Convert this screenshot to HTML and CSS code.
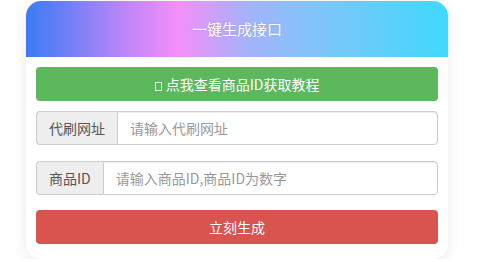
FILE: index.html
```html
<!DOCTYPE html>
<html lang="zh-CN">
<head>
<meta charset="UTF-8" />
<meta name="viewport" content="width=device-width, initial-scale=1.0" />
<title>一键生成接口</title>
<link rel="stylesheet" href="styles.css">
</head>
<body>
<div class="panel">
    <div class="panel-heading">一键生成接口</div>
    <div class="panel-body">
        <a class="btn btn-success" href="#"><i class="icon-box"></i> 点我查看商品ID获取教程</a>

        <div class="input-group">
            <span class="addon">代刷网址</span>
            <input type="text" placeholder="请输入代刷网址">
        </div>

        <div class="input-group">
            <span class="addon">商品ID</span>
            <input type="text" placeholder="请输入商品ID,商品ID为数字">
        </div>

        <button class="btn btn-danger" type="button">立刻生成</button>
    </div>
</div>
</body>
</html>
```

FILE: styles.css
```css
*{box-sizing:border-box}
body{
    margin:0;
    padding:1px 29px 0 26px;
    background:#fff;
    color:#333;
    font-family:"Microsoft YaHei","Noto Sans CJK SC","Liberation Sans",sans-serif;
    font-size:14px;
}

.panel{
    background:#fff;
    border-radius:15px;
    box-shadow:0 2px 14px rgba(0,0,0,.09);
    overflow:hidden;
    height:258px;
}
.panel-heading{
    height:56px;
    line-height:56px;
    text-align:center;
    color:#fff;
    font-size:15px;
    text-shadow:0 0 2px rgba(0,0,0,.15);
    background:linear-gradient(to right,#3a7bf5 0%,#c086f8 24%,#f48ef9 36%,#a6b2f9 52%,#86c2fa 66%,#3fd9fb 100%);
}
.panel-body{
    padding:10px 10px;
    display:flex;
    flex-direction:column;
}

/* ── buttons ── */
.btn{
    display:block;
    height:34px;
    line-height:34px;
    border:0;
    border-radius:4px;
    color:#fff;
    text-align:center;
    text-decoration:none;
    font-family:inherit;
    font-size:14px;
    padding:0;
    width:100%;
}
.btn-success{background:#5cb85c;margin-bottom:10px}
.btn-danger{background:#d9534f;margin-top:15px}
.icon-box{
    display:inline-block;
    width:7px;
    height:9px;
    border:1px solid #fff;
    vertical-align:-1px;
    margin-right:1px;
}

/* ── input groups ── */
.input-group{display:flex;height:34px}
.input-group + .input-group{margin-top:16px}
.addon{
    padding:0 12px;
    line-height:32px;
    background:#eee;
    border:1px solid #ccc;
    border-right:0;
    border-radius:4px 0 0 4px;
    color:#555;
    white-space:nowrap;
}
.input-group input{
    flex:1;
    min-width:0;
    border:1px solid #ccc;
    border-radius:0 4px 4px 0;
    padding:0 12px;
    font-family:inherit;
    font-size:14px;
    color:#555;
    box-shadow:inset 0 1px 1px rgba(0,0,0,.075);
}
.input-group input::placeholder{color:#999}
```
